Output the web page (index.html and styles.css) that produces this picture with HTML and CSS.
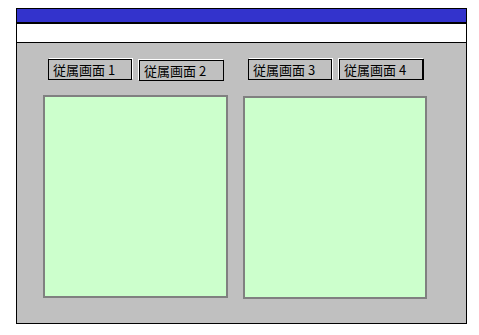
FILE: index.html
```html
<!DOCTYPE html>
<html lang="ja">
<head>
    <meta charset="UTF-8">
    <title>従属画面</title>
    <link rel="stylesheet" href="styles.css">
</head>
<body>

    <div class="window">
        <div class="title-bar"></div>
        <div class="menu-bar"></div>

        <div class="content">
            <div class="column">
                <div class="tabs">
                    <button class="tab flat">従属画面 1</button>
                    <button class="tab raised">従属画面 2</button>
                </div>
                <div class="panel"></div>
            </div>
            <div class="column">
                <div class="tabs">
                    <button class="tab flat">従属画面 3</button>
                    <button class="tab raised deep">従属画面 4</button>
                </div>
                <div class="panel"></div>
            </div>
        </div>
    </div>

</body>
</html>
```

FILE: styles.css
```css
body {
    margin: 0;
    background-color: white;
    font-family: "Noto Sans CJK JP", "Noto Sans", sans-serif;
}

.window {
    margin: 8px 0 0 16px;
    width: 449px;
    height: 314px;
    border: 1px solid black;
    display: flex;
    flex-direction: column;
}

.title-bar {
    height: 13px;
    background-color: #3333cc;
    border-bottom: 2px solid black;
}

.menu-bar {
    height: 18px;
    background-color: white;
    border-bottom: 1px solid black;
}

.content {
    flex: 1;
    background-color: #c0c0c0;
    display: grid;
    grid-template-columns: 185px 184px;
    gap: 15px;
    padding: 16px 0 0 26px;
}

.column {
    display: flex;
    flex-direction: column;
}

.tabs {
    display: flex;
    gap: 7px;
    padding-left: 5px;
    height: 21px;
    margin-bottom: 15px;
}

.tab {
    width: 84px;
    height: 21px;
    padding: 0 0 0 4px;
    margin: 0;
    background-color: #c0c0c0;
    color: black;
    border: 1px solid black;
    font-family: "Noto Sans CJK JP", sans-serif;
    font-size: 13px;
    line-height: 18px;
    text-align: left;
    cursor: pointer;
}

.tab.flat {
    box-shadow: 1px -1px 0 white;
}

.tab.raised {
    width: 85px;
    margin-top: 1px;
    box-shadow: -1px -1px 0 white;
}

.tab.deep {
    margin-top: 0;
    border-right-width: 2px;
}

.panel {
    height: 199px;
    background-color: #ccffcc;
    border: 2px solid #808080;
}

.column + .column .panel {
    margin-top: 1px;
}
```
